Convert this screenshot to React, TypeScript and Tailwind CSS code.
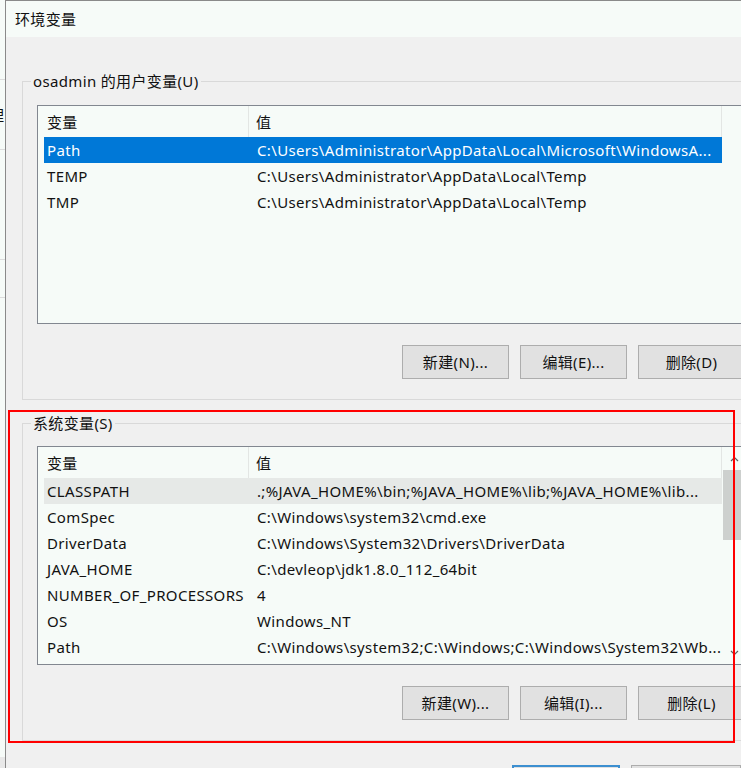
import React from "react";

const userVars = [
  { name: "Path", value: "C:\\Users\\Administrator\\AppData\\Local\\Microsoft\\WindowsA...", selected: true },
  { name: "TEMP", value: "C:\\Users\\Administrator\\AppData\\Local\\Temp" },
  { name: "TMP", value: "C:\\Users\\Administrator\\AppData\\Local\\Temp" },
];

const sysVars = [
  { name: "CLASSPATH", value: ".;%JAVA_HOME%\\bin;%JAVA_HOME%\\lib;%JAVA_HOME%\\lib...", hover: true },
  { name: "ComSpec", value: "C:\\Windows\\system32\\cmd.exe" },
  { name: "DriverData", value: "C:\\Windows\\System32\\Drivers\\DriverData" },
  { name: "JAVA_HOME", value: "C:\\devleop\\jdk1.8.0_112_64bit" },
  { name: "NUMBER_OF_PROCESSORS", value: "4" },
  { name: "OS", value: "Windows_NT" },
  { name: "Path", value: "C:\\Windows\\system32;C:\\Windows;C:\\Windows\\System32\\Wb..." },
];

type Row = { name: string; value: string; selected?: boolean; hover?: boolean };

function VarList({ rows, scroll }: { rows: Row[]; scroll?: boolean }) {
  return (
    <div className="flex h-[219px] w-[708px] border border-[#828790] bg-[#f6fbf8]">
      <div className="flex w-[684px] flex-col">
        <div className="flex h-[31px] shrink-0 items-center">
          <div className="flex h-full w-[211px] items-center border-r border-[#e3e6e4] pl-[9px]">变量</div>
          <div className="flex h-full w-[473px] items-center border-r border-[#e3e6e4] pl-[7px]">值</div>
        </div>
        {rows.map((r) => (
          <div
            key={r.name}
            className={
              "ml-[6px] flex h-[26px] w-[678px] shrink-0 items-center whitespace-nowrap " +
              (r.selected ? "bg-[#0078d7] text-white" : r.hover ? "bg-[#e6e9e7]" : "")
            }
          >
            <div className="w-[210px] shrink-0 overflow-hidden pl-[3px]">{r.name}</div>
            <div className="overflow-hidden pl-[3px]">{r.value}</div>
          </div>
        ))}
      </div>
      {scroll && (
        <div className="flex w-[22px] flex-col">
          <div className="flex h-[23px] items-center justify-center">
            <svg width="9" height="6" viewBox="0 0 9 6" className="ml-[2px]">
              <path d="M1 5 L4.5 1.5 L8 5" fill="none" stroke="#606060" strokeWidth="1.2" />
            </svg>
          </div>
          <div className="ml-[1px] h-[70px] bg-[#cdd0ce]" />
          <div className="flex-1" />
          <div className="flex h-[23px] items-center justify-center">
            <svg width="9" height="6" viewBox="0 0 9 6" className="ml-[2px]">
              <path d="M1 1 L4.5 4.5 L8 1" fill="none" stroke="#606060" strokeWidth="1.2" />
            </svg>
          </div>
        </div>
      )}
    </div>
  );
}

function Buttons({ labels }: { labels: string[] }) {
  return (
    <div className="mt-[21px] flex w-[708px] justify-end gap-[11px]">
      {labels.map((l) => (
        <button
          key={l}
          className="flex h-[34px] w-[107px] items-center justify-center border border-[#adadad] bg-[#e1e1e1]"
        >
          {l}
        </button>
      ))}
    </div>
  );
}

export default function App() {
  return (
    <div
      className="relative flex h-[768px] w-[741px] overflow-hidden bg-[#f0f0f0] text-[15px] leading-[20px] tracking-[0.35px] text-[#111]"
      style={{ fontFamily: '"Noto Sans", "Noto Sans CJK SC", sans-serif' }}
    >
      {/* window behind */}
      <div className="flex w-[5px] shrink-0 flex-col bg-[#f6fbf8]">
        <div className="h-[80px] border-b border-[#dcdcdc]" />
        <div className="flex h-[70px] items-center overflow-hidden border-b border-[#dcdcdc]">
          <span className="-ml-[11px]">理</span>
        </div>
        <div className="h-[110px] border-b border-[#dcdcdc]" />
        <div className="h-[38px] border-b border-[#dcdcdc]" />
        <div className="flex-1" />
        <div className="h-[11px] bg-[#e8e8e8]" />
      </div>

      {/* dialog */}
      <div className="flex w-[771px] shrink-0 flex-col border-l border-t border-[#8a8a8a]">
        <div className="flex h-[36px] shrink-0 items-center bg-[#f6fbf8] pl-[9px]">环境变量</div>
        <div className="flex flex-col pl-[16px] pt-[34px]">
          <fieldset className="w-[738px] border border-[#d9d9d9] pb-[20px] pl-[14px] pt-[14px]">
            <legend className="-ml-[6px] px-[2px]">osadmin 的用户变量(U)</legend>
            <VarList rows={userVars} />
            <Buttons labels={["新建(N)...", "编辑(E)...", "删除(D)"]} />
          </fieldset>
          <fieldset className="mt-[13px] w-[738px] border border-[#d9d9d9] pb-[20px] pl-[14px] pt-[13px]">
            <legend className="-ml-[6px] px-[2px]">系统变量(S)</legend>
            <VarList rows={sysVars} scroll />
            <Buttons labels={["新建(W)...", "编辑(I)...", "删除(L)"]} />
          </fieldset>
          <div className="mt-[24px] flex gap-[11px] pl-[490px]">
            <div className="h-[34px] w-[108px] border-2 border-[#3c8fd0] bg-[#e1e1e1]" />
            <div className="h-[34px] w-[110px] border border-[#adadad] bg-[#e1e1e1]" />
          </div>
        </div>
      </div>

      {/* annotation */}
      <div className="absolute left-[8px] top-[410px] h-[333px] w-[727px] border-2 border-[#ff0000]" />
    </div>
  );
}
